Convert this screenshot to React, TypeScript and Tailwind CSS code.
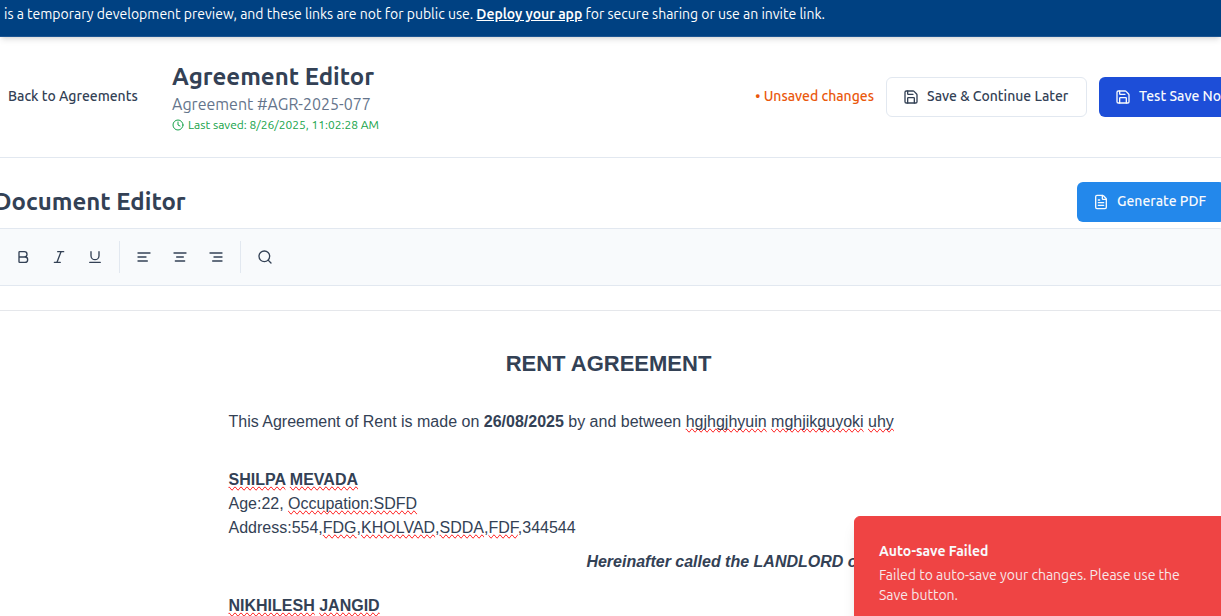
import type { ReactNode } from "react";
import { Bold, Clock, FileText, Italic, Save, Search, Underline } from "lucide-react";

function ToolButton({ label, children }: { label: string; children: ReactNode }) {
  return (
    <button
      type="button"
      aria-label={label}
      className="flex h-8 w-8 items-center justify-center rounded-md text-[#334155] hover:bg-slate-100"
    >
      {children}
    </button>
  );
}

function LinesIcon({ d }: { d: string }) {
  return (
    <svg
      width="16"
      height="16"
      viewBox="0 0 24 24"
      fill="none"
      stroke="currentColor"
      strokeWidth="2"
      strokeLinecap="round"
      strokeLinejoin="round"
      aria-hidden="true"
    >
      <path d={d} />
    </svg>
  );
}

function Divider() {
  return <div className="mx-1 h-8 w-px bg-[#e2e8f0]" />;
}

function Misspelled({ children }: { children: ReactNode }) {
  return <span className="[text-decoration-line:spelling-error]">{children}</span>;
}

function PreviewBanner() {
  return (
    <div className="relative z-10 h-[37px] whitespace-nowrap border-b border-[#1c5592] bg-[#004182] pl-1 pt-[5px] text-sm text-white shadow-md">
      is a temporary development preview, and these links are not for public use.{" "}
      <a href="#deploy" className="font-semibold underline">
        Deploy your app
      </a>{" "}
      for secure sharing or use an invite link.
    </div>
  );
}

function PageHeader() {
  return (
    <header className="flex items-center justify-between border-b border-[#e2e8f0] py-6 pl-2">
      <div className="flex items-center gap-8">
        <button type="button" className="w-[132px] whitespace-nowrap text-left text-sm font-medium">
          Back to Agreements
        </button>
        <div>
          <h1 className="text-2xl font-bold leading-8">Agreement Editor</h1>
          <p className="text-base text-[#64748b]">Agreement #AGR-2025-077</p>
          <p className="flex items-center gap-1 text-xs text-[#16a34a]">
            <Clock size={12} />
            Last saved: 8/26/2025, 11:02:28 AM
          </p>
        </div>
      </div>
      <div className="-mr-8 flex shrink-0 items-center gap-3 whitespace-nowrap text-sm font-medium">
        <span className="text-[#ea580c]">• Unsaved changes</span>
        <button
          type="button"
          className="flex h-10 w-[201px] items-center gap-2 rounded-md border border-[#e2e8f0] bg-white px-4"
        >
          <Save size={16} />
          Save &amp; Continue Later
        </button>
        <button
          type="button"
          className="flex h-10 w-[154px] items-center gap-2 rounded-md bg-[#1d4ed8] px-4 text-slate-50"
        >
          <Save size={16} />
          Test Save Now
        </button>
      </div>
    </header>
  );
}

function Toolbar() {
  return (
    <div
      role="toolbar"
      className="flex items-center gap-1 rounded-md border border-[#e2e8f0] bg-[#f8fafc] p-3"
    >
      <ToolButton label="Bold">
        <Bold size={16} />
      </ToolButton>
      <ToolButton label="Italic">
        <Italic size={16} />
      </ToolButton>
      <ToolButton label="Underline">
        <Underline size={16} />
      </ToolButton>
      <Divider />
      <ToolButton label="Align left">
        <LinesIcon d="M21 6H3M15 12H3M17 18H3" />
      </ToolButton>
      <ToolButton label="Align center">
        <LinesIcon d="M21 6H3M17 12H7M19 18H5" />
      </ToolButton>
      <ToolButton label="Align right">
        <LinesIcon d="M21 6H3M21 12H9M21 18H7" />
      </ToolButton>
      <Divider />
      <ToolButton label="Search">
        <Search size={16} />
      </ToolButton>
    </div>
  );
}

function AgreementDocument() {
  return (
    <article className="mt-6 rounded-md border border-[#e5e7eb] bg-white pb-10 pr-[2px] pt-[37px] font-['Liberation_Sans',Arial,sans-serif] text-base">
      <div className="mx-auto max-w-[760px]">
        <h3 className="text-center text-[22px] font-bold leading-8">RENT AGREEMENT</h3>
        <p className="mt-[30px]">
          This Agreement of Rent is made on <b>26/08/2025</b> by and between{" "}
          <Misspelled>hgjhgjhyuin</Misspelled> <Misspelled>mghjikguyoki</Misspelled>{" "}
          <Misspelled>uhy</Misspelled>
        </p>
        <p className="mt-[34px]">
          <b>
            <Misspelled>SHILPA</Misspelled> <Misspelled>MEVADA</Misspelled>
          </b>
          <br />
          Age:22, <Misspelled>Occupation:SDFD</Misspelled>
          <br />
          Address:554,<Misspelled>FDG</Misspelled>,<Misspelled>KHOLVAD</Misspelled>,
          <Misspelled>SDDA</Misspelled>,<Misspelled>FDF</Misspelled>,344544
        </p>
        <p className="mt-[10px] text-right font-bold italic">
          Hereinafter called the LANDLORD of the FIRST PART
        </p>
        <p className="mt-5">
          <b>
            <Misspelled>NIKHILESH</Misspelled> <Misspelled>JANGID</Misspelled>
          </b>
        </p>
      </div>
    </article>
  );
}

function Toast() {
  return (
    <div
      role="alert"
      className="absolute -bottom-[14px] -right-[53px] z-20 w-[420px] rounded-md border border-[#ef4444] bg-[#ef4444] pb-[23px] pl-6 pr-20 pt-[25px] text-sm text-slate-50 shadow-lg"
    >
      <p className="font-bold">Auto-save Failed</p>
      <p className="mt-1 opacity-90">
        Failed to auto-save your changes. Please use the Save button.
      </p>
    </div>
  );
}

export default function App() {
  return (
    <div className="relative h-screen overflow-hidden bg-white font-['Ubuntu_Sans',Ubuntu,'Noto_Sans',sans-serif] text-[#334155]">
      <PreviewBanner />
      <PageHeader />
      <main className="-ml-[6px] -mr-1 pt-6">
        <div className="mb-[6px] flex items-center justify-between">
          <h2 className="text-2xl font-bold">Document Editor</h2>
          <button
            type="button"
            className="flex h-10 w-[148px] items-center gap-2 whitespace-nowrap rounded-md bg-[#2388eb] px-4 text-sm font-medium text-slate-50"
          >
            <FileText size={16} />
            Generate PDF
          </button>
        </div>
        <Toolbar />
        <AgreementDocument />
      </main>
      <Toast />
    </div>
  );
}
